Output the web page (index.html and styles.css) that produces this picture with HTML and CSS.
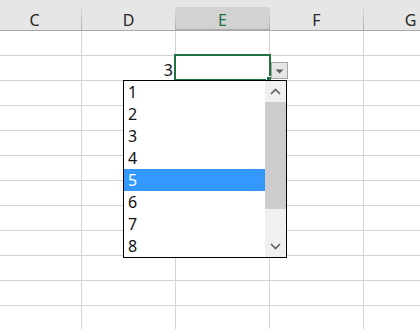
FILE: index.html
```html
<!DOCTYPE html>
<html lang="en">
<head>
    <meta charset="UTF-8">
    <title>Sheet - data validation list</title>
    <link rel="stylesheet" href="styles.css">
</head>
<body>

<div class="sheet">
    <div class="col-heads">
        <div class="col-head">C</div>
        <div class="col-head">D</div>
        <div class="col-head selected">E</div>
        <div class="col-head">F</div>
        <div class="col-head">G</div>
    </div>

    <div class="row"><div class="cell"></div><div class="cell"></div><div class="cell"></div><div class="cell"></div><div class="cell"></div></div>
    <div class="row"><div class="cell"></div><div class="cell num">3</div><div class="cell"></div><div class="cell"></div><div class="cell"></div></div>
    <div class="row"><div class="cell"></div><div class="cell"></div><div class="cell"></div><div class="cell"></div><div class="cell"></div></div>
    <div class="row"><div class="cell"></div><div class="cell"></div><div class="cell"></div><div class="cell"></div><div class="cell"></div></div>
    <div class="row"><div class="cell"></div><div class="cell"></div><div class="cell"></div><div class="cell"></div><div class="cell"></div></div>
    <div class="row"><div class="cell"></div><div class="cell"></div><div class="cell"></div><div class="cell"></div><div class="cell"></div></div>
    <div class="row"><div class="cell"></div><div class="cell"></div><div class="cell"></div><div class="cell"></div><div class="cell"></div></div>
    <div class="row"><div class="cell"></div><div class="cell"></div><div class="cell"></div><div class="cell"></div><div class="cell"></div></div>
    <div class="row"><div class="cell"></div><div class="cell"></div><div class="cell"></div><div class="cell"></div><div class="cell"></div></div>
    <div class="row"><div class="cell"></div><div class="cell"></div><div class="cell"></div><div class="cell"></div><div class="cell"></div></div>
    <div class="row"><div class="cell"></div><div class="cell"></div><div class="cell"></div><div class="cell"></div><div class="cell"></div></div>
    <div class="row"><div class="cell"></div><div class="cell"></div><div class="cell"></div><div class="cell"></div><div class="cell"></div></div>
</div>

<!-- active cell E2 with its list dropdown -->
<div class="active-cell"></div>

<div class="drop-button">
    <svg width="9" height="5" viewBox="0 0 9 5"><path d="M0.5 0.5 L8.5 0.5 L4.5 4.5 Z" fill="#5a5a5a"/></svg>
</div>

<div class="listbox">
    <div class="options">
        <div class="option">1</div>
        <div class="option">2</div>
        <div class="option">3</div>
        <div class="option">4</div>
        <div class="option current">5</div>
        <div class="option">6</div>
        <div class="option">7</div>
        <div class="option">8</div>
    </div>
    <div class="scrollbar">
        <div class="scroll-btn">
            <svg width="11" height="7" viewBox="0 0 11 7"><path d="M1 6 L5.5 1.5 L10 6" fill="none" stroke="#606060" stroke-width="1.6"/></svg>
        </div>
        <div class="track">
            <div class="thumb"></div>
        </div>
        <div class="scroll-btn">
            <svg width="11" height="7" viewBox="0 0 11 7"><path d="M1 1 L5.5 5.5 L10 1" fill="none" stroke="#606060" stroke-width="1.6"/></svg>
        </div>
    </div>
</div>

</body>
</html>
```

FILE: styles.css
```css
body {
    margin: 0;
    padding: 0;
    background-color: #ffffff;
    font-family: "Noto Sans", "Liberation Sans", sans-serif;
    font-size: 16px;
    color: #222222;
    overflow: hidden;
}

.sheet {
    margin-left: -12px;
    width: 432px;
    height: 329px;
    overflow: hidden;
}

.col-heads {
    display: flex;
    height: 31px;
    box-sizing: border-box;
    background-color: #e6e6e6;
    border-bottom: 1px solid #a8a8a8;
}

.col-head {
    width: 94px;
    flex: none;
    box-sizing: border-box;
    margin-top: 7px;
    height: 23px;
    line-height: 26px;
    text-align: center;
    color: #262626;
    border-right: 1px solid;
    border-image: linear-gradient(#e0e0e0, #a8a8a8) 1;
}

.col-head.selected {
    background-color: #d2d2d2;
    color: #217346;
    height: 24px;
    margin-bottom: -1px;
    border-bottom: 2px solid #217346;
}

.row {
    display: flex;
    height: 25px;
    box-sizing: border-box;
    border-bottom: 1px solid #d4d4d4;
}

.cell {
    width: 94px;
    flex: none;
    box-sizing: border-box;
    border-right: 1px solid #d4d4d4;
}

.cell.num {
    text-align: right;
    padding-right: 2px;
    line-height: 28px;
    color: #111111;
}

.active-cell {
    position: absolute;
    left: 174px;
    top: 54px;
    width: 97px;
    height: 27px;
    box-sizing: border-box;
    border: 2px solid #217346;
}

.active-cell::after {
    content: "";
    position: absolute;
    right: -3px;
    bottom: -3px;
    width: 4px;
    height: 4px;
    background-color: #217346;
    border: 1px solid #ffffff;
}

.drop-button {
    position: absolute;
    left: 271px;
    top: 62px;
    width: 17px;
    height: 17px;
    box-sizing: border-box;
    border: 1px solid #a6a6a6;
    background-color: #e6e6e6;
    display: flex;
    align-items: center;
    justify-content: center;
}

.drop-button svg {
    margin-top: 2px;
}

.listbox {
    position: absolute;
    left: 123px;
    top: 80px;
    width: 164px;
    height: 178px;
    box-sizing: border-box;
    border: 1px solid #000000;
    background-color: #ffffff;
    display: flex;
}

.options {
    width: 141px;
}

.option {
    height: 22px;
    line-height: 22px;
    padding-left: 4px;
    color: #111111;
}

.option.current {
    background-color: #3399ff;
    color: #ffffff;
}

.scrollbar {
    flex: 1;
    background-color: #f0f0f0;
    display: flex;
    flex-direction: column;
}

.scroll-btn {
    height: 21px;
    display: flex;
    align-items: center;
    justify-content: center;
}

.track {
    flex: 1;
}

.thumb {
    height: 107px;
    background-color: #cdcdcd;
}
```
